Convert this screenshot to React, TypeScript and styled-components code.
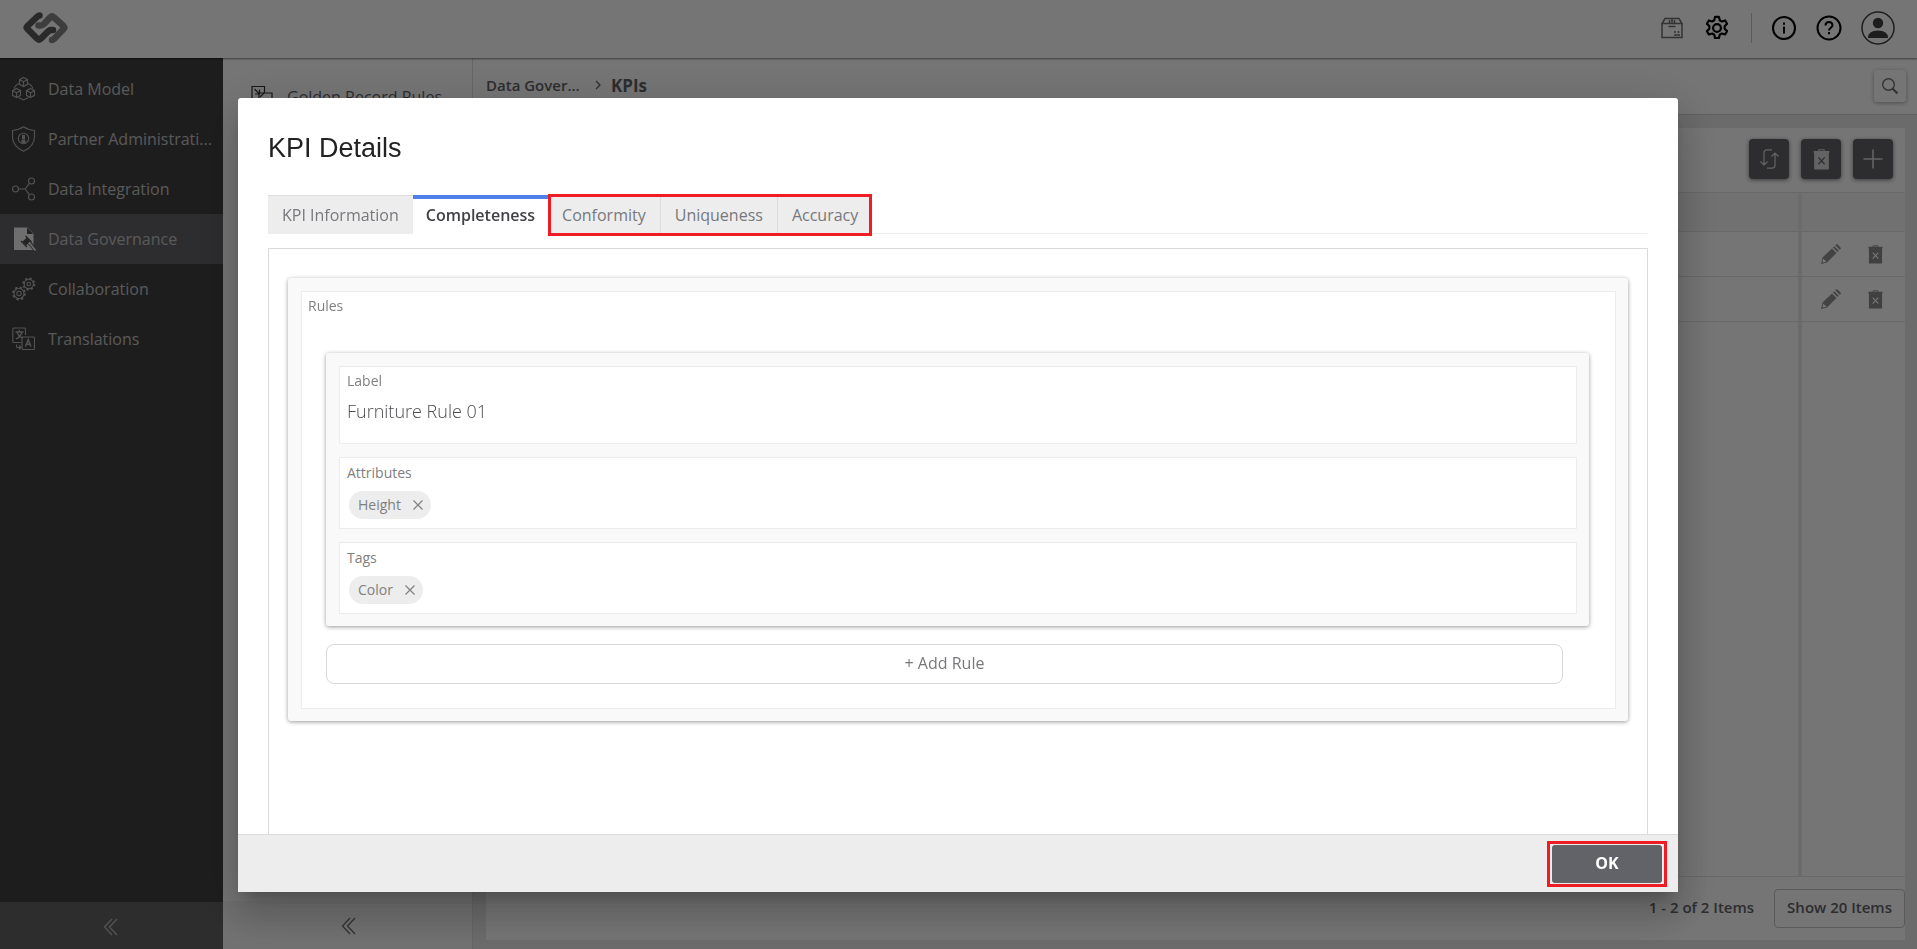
import React from "react";
import styled, { createGlobalStyle, css } from "styled-components";

const GlobalStyle = createGlobalStyle`
  *, *::before, *::after { box-sizing: border-box; }
  html, body, #root { height: 100%; }
  body {
    margin: 0;
    font-family: "Open Sans", "Noto Sans", sans-serif;
    font-size: 16px;
    color: #626368;
    overflow: hidden;
  }
  button, input { font: inherit; color: inherit; }
  button { cursor: pointer; }
`;

/* ---------- application shell ---------- */

const Shell = styled.div`
  display: flex;
  flex-direction: column;
  height: 100vh;
  background: #fff;
`;

const Header = styled.header`
  display: flex;
  align-items: center;
  justify-content: space-between;
  flex: none;
  height: 58px;
  padding: 0 22px 2px 23px;
  background: #fff;
  box-shadow: 0 1px 2px rgba(0, 0, 0, 0.5);
  z-index: 1;
`;

const HeaderTools = styled.div`
  display: flex;
  align-items: center;
`;

const IconButton = styled.button<{ $gap?: number }>`
  display: flex;
  padding: 0;
  margin-left: ${(p) => p.$gap ?? 0}px;
  border: 0;
  background: none;
  color: #000;
`;

const Divider = styled.span`
  width: 1px;
  height: 30px;
  margin-left: 21px;
  background: #c4c4c4;
`;

const Body = styled.div`
  display: flex;
  flex: 1;
  min-height: 0;
`;

const Sidebar = styled.nav`
  display: flex;
  flex-direction: column;
  flex: none;
  width: 223px;
  background: #414141;
`;

const MenuList = styled.ul`
  flex: 1;
  margin: 0;
  padding: 6px 0 0;
  list-style: none;
`;

const MenuLink = styled.a<{ $active?: boolean }>`
  display: flex;
  align-items: center;
  gap: 12px;
  height: 50px;
  padding: 0 0 0 12px;
  color: #c2c2c2;
  text-decoration: none;
  white-space: nowrap;
  background: ${(p) => (p.$active ? "#626267" : "none")};

  svg { flex: none; }
`;

const CollapseButton = styled.button<{ $light?: boolean }>`
  display: flex;
  align-items: center;
  justify-content: center;
  flex: none;
  height: ${(p) => (p.$light ? 48 : 47)}px;
  padding: ${(p) => (p.$light ? "2px 0 0 2px" : "3px 2px 0 0")};
  border: 0;
  color: ${(p) => (p.$light ? "#6f6f6f" : "#b4b4b4")};
  background: ${(p) => (p.$light ? "#f6f6f6" : "#626262")};
`;

const SubPanel = styled.aside`
  display: flex;
  flex-direction: column;
  flex: none;
  width: 250px;
  border-right: 1px solid #dedede;
`;

const SubMenu = styled.div`
  flex: 1;
  padding: 27px 20px 0 28px;
`;

const SubLink = styled.a`
  display: flex;
  align-items: center;
  gap: 14px;
  color: #626368;
  text-decoration: none;
  line-height: 24px;
`;

const Main = styled.main`
  display: flex;
  flex-direction: column;
  flex: 1;
  min-width: 0;
  background: #e9e9e9;
`;

const TopBar = styled.div`
  display: flex;
  align-items: center;
  justify-content: space-between;
  flex: none;
  height: 57px;
  padding: 0 11px 0 13px;
  background: #fff;
  border-bottom: 1px solid #cfcfcf;
`;

const Breadcrumb = styled.nav`
  display: flex;
  align-items: center;
  gap: 10px;
  padding-bottom: 2px;
  font-size: 17px;
  font-weight: 700;

  a {
    width: 99px;
    white-space: nowrap;
    font-size: 15px;
    font-weight: 600;
    color: inherit;
    text-decoration: none;
  }
`;

const SearchButton = styled.button`
  display: flex;
  align-items: center;
  justify-content: center;
  width: 32px;
  height: 32px;
  padding: 0;
  border: 0;
  border-radius: 3px;
  background: #fff;
  box-shadow: 0 1px 4px rgba(0, 0, 0, 0.35);
`;

const GridCard = styled.section`
  display: flex;
  flex-direction: column;
  flex: 1;
  min-height: 0;
  margin: 13px 12px 9px 13px;
  background: #fff;
`;

const GridTools = styled.div`
  display: flex;
  justify-content: flex-end;
  gap: 12px;
  flex: none;
  height: 64px;
  padding: 11px 12px 0;
`;

const ToolButton = styled.button`
  display: flex;
  align-items: center;
  justify-content: center;
  width: 40px;
  height: 40px;
  padding: 0;
  border: 0;
  border-radius: 4px;
  color: #d8d8d8;
  background: #626368;
  box-shadow: 0 1px 4px rgba(0, 0, 0, 0.5);
`;

const Grid = styled.table`
  flex: 1;
  display: grid;
  grid-template-rows: auto 1fr;
  border-collapse: collapse;

  thead, tbody { display: flex; flex-direction: column; }
`;

const GridRow = styled.tr<{ $kind: "head" | "row" | "rest" }>`
  display: flex;
  border-top: 1px solid #e4e4e4;
  background: ${(p) => (p.$kind === "head" ? "#f6f6f6" : "#fff")};
  ${(p) =>
    p.$kind === "rest"
      ? css`flex: 1; border-bottom: 1px solid #e4e4e4;`
      : css`height: ${p.$kind === "head" ? 39 : 45}px;`}

  th, td { padding: 0; }
  > :first-child { flex: 1; }
  > :last-child {
    display: flex;
    align-items: center;
    gap: 27px;
    width: 107px;
    padding-left: 19px;
    border-left: 4px solid #e9e9e9;
  }
`;

const Pager = styled.div`
  display: flex;
  align-items: center;
  justify-content: flex-end;
  gap: 20px;
  flex: none;
  height: 63px;
  font-size: 15px;
  font-weight: 600;

  span { padding-bottom: 4px; }
`;

const PageSizeButton = styled.button`
  height: 39px;
  padding: 0 12px 4px;
  border: 1px solid #c4c4c4;
  border-radius: 4px;
  background: none;
`;

/* ---------- dialog ---------- */

const Backdrop = styled.div`
  position: fixed;
  inset: 0;
  z-index: 10;
  display: flex;
  padding: 98px 239px 57px 238px;
  background: rgba(0, 0, 0, 0.54);
`;

const Dialog = styled.section`
  display: flex;
  flex-direction: column;
  flex: 1;
  border-radius: 3px 3px 0 0;
  background: #fff;
  box-shadow: 0 11px 15px -7px rgba(0, 0, 0, 0.2),
    0 24px 38px 3px rgba(0, 0, 0, 0.14), 0 9px 46px 8px rgba(0, 0, 0, 0.12);
`;

const DialogContent = styled.div`
  display: flex;
  flex-direction: column;
  flex: 1;
  min-height: 0;
  padding: 31px 30px 0;
`;

const Title = styled.h1`
  margin: 0;
  font-family: "Liberation Sans", Arial, sans-serif;
  font-size: 27px;
  line-height: 38px;
  font-weight: 400;
  color: #222;
`;

const TabBar = styled.div`
  display: flex;
  flex: none;
  height: 39px;
  margin: 28px 1px 14px 0;
  border-bottom: 1px solid #ececec;
`;

const Tab = styled.button<{ $active?: boolean }>`
  height: 39px;
  padding: 0 14px;
  border: 0;
  border-top: 1px solid #dcdcdc;
  color: #77787c;
  background: #ededed;

  & + & { border-left: 1px solid #dcdcdc; }

  ${(p) =>
    p.$active &&
    css`
      && {
        border-top: 4px solid #4f80ea;
        border-left: 0;
        padding: 0 13px 3px;
        font-weight: 600;
        color: #414246;
        background: #fff;
      }
    `}
`;

const Highlight = styled.div`
  position: relative;
  display: flex;

  &::after {
    content: "";
    position: absolute;
    inset: -1px 0 -3px 0;
    border: 3px solid #f01c24;
    pointer-events: none;
  }
`;

const Panel = styled.div`
  flex: 1;
  min-height: 0;
  padding: 29px 19px 0;
  border: 1px solid #dadada;
  border-bottom: 0;
`;

const Card = styled.div`
  display: flex;
  flex-direction: column;
  gap: 13px;
  padding: 13px 12px 12px 13px;
  border-radius: 3px;
  background: #f9f9f9;
  box-shadow: 0 1px 4px rgba(0, 0, 0, 0.4);
`;

const Group = styled.fieldset`
  min-width: 0;
  margin: 0;
  padding: 4px 26px 24px 24px;
  border: 1px solid #ececec;
  background: #fff;
`;

const GroupLabel = styled.legend`
  float: left;
  width: 100%;
  margin: 0 0 37px -18px;
  padding: 0;
  font-size: 14px;
  line-height: 20px;
  color: #808080;
`;

const Clear = styled.div`
  clear: both;
`;

const Field = styled.div<{ $tall?: boolean }>`
  height: ${(p) => (p.$tall ? 78 : 72)}px;
  padding: ${(p) => (p.$tall ? 4 : 5)}px 7px 0;
  border: 1px solid #ececec;
  background: #fff;
`;

const FieldLabel = styled.label`
  display: block;
  font-size: 14px;
  line-height: 20px;
  color: #808080;
`;

const TextInput = styled.input`
  width: 100%;
  height: 30px;
  margin-top: 5px;
  padding: 0;
  border: 0;
  outline: 0;
  font-size: 18px;
  font-weight: 300;
  color: #4c4c4f;
  background: none;
`;

const Chip = styled.span`
  display: flex;
  align-items: center;
  gap: 12px;
  width: fit-content;
  height: 28px;
  margin: 8px 0 0 2px;
  padding: 0 8px 1px 9px;
  border-radius: 14px;
  font-size: 14px;
  color: #808080;
  background: #ededed;

  button {
    display: flex;
    padding: 0;
    border: 0;
    background: none;
  }
`;

const AddButton = styled.button`
  display: block;
  width: calc(100% - 26px);
  height: 40px;
  margin-top: 18px;
  padding: 0 0 3px;
  border: 1px solid #d8d8d8;
  border-radius: 8px;
  color: #77787c;
  background: #fff;
`;

const DialogFooter = styled.footer`
  display: flex;
  align-items: center;
  justify-content: flex-end;
  flex: none;
  height: 58px;
  padding: 0 11px;
  border-top: 1px solid #dadada;
  background: #ededed;
`;

const OkFrame = styled.div`
  display: flex;
  padding: 1px 2px;
  border: 3px solid #f01c24;
`;

const OkButton = styled.button`
  width: 110px;
  height: 38px;
  padding: 0 0 2px;
  border: 0;
  border-radius: 3px;
  font-weight: 700;
  color: #fff;
  background: #626368;
`;

/* ---------- icons ---------- */

const Logo = () => (
  <svg width="46" height="32" viewBox="23 12 46 32" fill="none" strokeWidth="6.5" strokeLinejoin="round" strokeLinecap="round">
    <path d="M38.5 25.5h2q2 0 3.500-1.500L50 17.500q2-2 4 0l9.500 8.500q1.500 1.500 0 3L54 39q-1 1-2 1" stroke="#858585" />
    <path d="M39.500 15.500q-1 0-2 1L27.500 26q-1.500 1.500 0 3L37 38.500q2 2 4 0l7-7q1.500-1.500 3-1.500h2" stroke="#595959" />
  </svg>
);

const PackageIcon = () => (
  <svg width="22" height="22" viewBox="0 0 22 22" fill="none" stroke="#707070" strokeWidth="1.500">
    <path d="M1 6.500 4 1.500h14l3 5V20.500H1zM1 6.500h20M8.500 6.500V3M13.500 6.500V3M11 1.500v5M7.500 9.500h7" />
    <path d="M14 14v2M17.500 14v2M13 18h6" />
  </svg>
);

const GearIcon = () => (
  <svg width="26" height="26" viewBox="0 0 24 24" fill="none" stroke="currentColor" strokeWidth="2" strokeLinejoin="round">
    <path d="M10.200 1.800h3.600l.7 3 2 1.150 3-.9 1.800 3.100-2.250 2.100v2.500l2.250 2.100-1.800 3.100-3-.9-2 1.150-.7 3h-3.600l-.7-3-2-1.150-3 .9-1.800-3.100 2.250-2.100v-2.500L2.700 8.150l1.800-3.100 3 .9 2-1.150z" />
    <circle cx="12" cy="12" r="3.600" />
  </svg>
);

const InfoIcon = () => (
  <svg width="26" height="26" viewBox="0 0 26 26" fill="none" stroke="currentColor" strokeWidth="2">
    <circle cx="13" cy="13" r="11" />
    <path d="M13 11.500V18.500M13 7.500v2.200" />
  </svg>
);

const HelpIcon = () => (
  <svg width="26" height="26" viewBox="0 0 26 26" fill="none" stroke="currentColor" strokeWidth="2">
    <circle cx="13" cy="13" r="11.500" />
    <path d="M9.500 10.500C9.500 6 16.500 6 16.500 10.200 16.500 12.500 13 13 13 15.500M13 17v2.200" />
  </svg>
);

const AvatarIcon = () => (
  <svg width="34" height="34" viewBox="0 0 34 34">
    <circle cx="17" cy="17" r="16" fill="none" stroke="#414141" strokeWidth="1.500" />
    <circle cx="17" cy="12" r="5.200" fill="#414141" />
    <path d="M7 27q0-7.500 10-7.500T27 27z" fill="#414141" />
  </svg>
);

const MenuSvg = ({ children }: { children: React.ReactNode }) => (
  <svg width="24" height="26" viewBox="0 0 24 26" fill="none" stroke="#b4b4b4" strokeWidth="1.100">
    {children}
  </svg>
);

const cube = (x: number, y: number) => (
  <path d={`M${x} ${y - 4.500}l4 2.200v4.600l-4 2.200-4-2.200v-4.600zM${x - 4} ${y - 2.300}l4 2 4-2M${x} ${y - 0.3}v4.800`} />
);

const ModelIcon = () => (
  <MenuSvg>
    {cube(11.5, 6)}
    {cube(4.500, 17)}
    {cube(18.500, 17)}
    <path d="M7 7.500C4 9 2.500 10.500 2.300 12.500M16 7.500c3 1.500 4.500 3 4.700 5M6.500 21.500l5 2.500 5-2.500" />
  </MenuSvg>
);

const ShieldIcon = () => (
  <MenuSvg>
    <path d="M11.500.8Q16 4 22.500 4.500v6.500Q22.500 20 11.500 25.200.5 20 .5 11V4.500Q7 4 11.500.8z" />
    <circle cx="11.500" cy="12.500" r="5.200" />
    <path d="M11.500 9v4.500M9.500 15.500h4" strokeWidth="3" />
  </MenuSvg>
);

const IntegrationIcon = () => (
  <MenuSvg>
    <circle cx="3.500" cy="13" r="3" />
    <circle cx="19.500" cy="5" r="3" />
    <circle cx="19.500" cy="21" r="3" />
    <path d="M6.500 13H13L17.500 7.300M13 13l4.500 5.700" />
  </MenuSvg>
);

const GovernanceIcon = () => (
  <svg width="24" height="26" viewBox="0 0 24 26">
    <path d="M2 1.500h13.500l6 6V24H2z" fill="#efefef" />
    <path d="M15 1.500v6.500h6.500" fill="#4e4e52" />
    <path d="M10.500 15.500l4.500-4 3.500 4-4.500 4z" fill="#4e4e52" />
    <path d="M13.500 10l6 6M9 15l6 6" stroke="#4e4e52" strokeWidth="1.300" />
    <path d="M17.500 17l6 7" stroke="#626267" strokeWidth="4" />
    <path d="M17 16.500l6.500 8" stroke="#efefef" strokeWidth="1.800" />
  </svg>
);

const gear = (cx: number, cy: number, r: number) => (
  <g>
    <circle cx={cx} cy={cy} r={r} />
    <circle cx={cx} cy={cy} r={r - 2.8} />
    <circle cx={cx} cy={cy} r={r + 1} strokeWidth="1.800" strokeDasharray={`${((r + 1) * Math.PI) / 8}`} />
  </g>
);

const CollaborationIcon = () => (
  <MenuSvg>
    {gear(7, 17.500, 5)}
    {gear(16.800, 8, 4.600)}
  </MenuSvg>
);

const TranslationsIcon = () => (
  <MenuSvg>
    <path d="M13.500 9V3q0-1-1-1H1.800q-1 0-1 1v12.500q0 1 1 1H9" />
    <rect x="10" y="11" width="12.500" height="12.500" rx="1" />
    <path d="M3.500 6h8M7.300 4v2M10 6q-1.500 5-6 7M5 6q1.500 4.500 6 6" strokeWidth="1.300" />
    <path d="M13.500 20.500l2.700-7 2.700 7M14.300 18.300h3.800" strokeWidth="1.400" />
    <path d="M4.500 18.500v2q0 1 1 1h3M7 19.500l2 2-2 2" />
  </MenuSvg>
);

const Chevrons = () => (
  <svg width="15" height="18" viewBox="0 0 15 18" fill="none" stroke="currentColor" strokeWidth="1.300">
    <path d="M9 1 1.500 9 9 17M14 1 6.500 9l7.500 8" />
  </svg>
);

const GoldenIcon = () => (
  <svg width="22" height="24" viewBox="0 0 22 24" fill="none" stroke="#333" strokeWidth="1.200">
    <path d="M13.500 8V1.500H1V17h7M8 8h13v15H8zM3.500 4l5 5M8.500 4.500V9H4" />
    <path d="M13 8 9 12" />
  </svg>
);

const SearchIcon = () => (
  <svg width="18" height="18" viewBox="0 0 18 18" fill="none" stroke="#707070">
    <circle cx="7.500" cy="7.500" r="5.800" strokeWidth="1.400" />
    <path d="M11.500 11.500l5 5" strokeWidth="2.200" />
  </svg>
);

const SyncIcon = () => (
  <svg width="20" height="20" viewBox="0 0 20 20" fill="none" stroke="currentColor" strokeWidth="1.200">
    <path d="M13 .8H8q-3 0-3 3V16M1.500 12.500 5 16l3.500-3.500M8 19.200h5q3 0 3-3V4M12.500 7.500 16 4l3.500 3.500" />
  </svg>
);

const TrashIcon = ({ width, body, mark }: { width: number; body: string; mark: string }) => (
  <svg width={width} height={width + 4} viewBox="0 0 16 20">
    <path d="M5.500 2V.7h5V2" fill="none" stroke={body} />
    <path d="M.5 1.800h15V3.500h-.5v16H1v-16H.5z" fill={body} />
    <path d="M5 8l6 6.500M11 8l-6 6.500" stroke={mark} strokeWidth="1.200" />
  </svg>
);

const PlusIcon = () => (
  <svg width="20" height="20" viewBox="0 0 20 20" stroke="currentColor" strokeWidth="1.600">
    <path d="M10 .5v19M.5 10h19" />
  </svg>
);

const PencilIcon = () => (
  <svg width="20" height="20" viewBox="0 0 20 20" fill="#929292">
    <path d="M0 20l1.500-6.500L11 4.500l4.500 4.500L6 18.500zM12 3.600l1.300-1.300 4.500 4.500-1.300 1.300zM14.300 1.300l.7-.7q.8-.8 1.600 0l2.900 2.900q.8.800 0 1.600l-.7.7z" />
    <path d="M2.200 14.500l3.300 3.200-3.200.9-.9-.8z" fill="#fff" />
  </svg>
);

const CloseIcon = () => (
  <svg width="10" height="10" viewBox="0 0 10 10" stroke="#808184" strokeWidth="1.200">
    <path d="M.5.5l9 9M9.500.5l-9 9" />
  </svg>
);

/* ---------- page ---------- */

const menu = [
  { label: "Data Model", icon: <ModelIcon /> },
  { label: "Partner Administrati...", icon: <ShieldIcon /> },
  { label: "Data Integration", icon: <IntegrationIcon /> },
  { label: "Data Governance", icon: <GovernanceIcon />, active: true },
  { label: "Collaboration", icon: <CollaborationIcon /> },
  { label: "Translations", icon: <TranslationsIcon /> },
];

const ChipField = ({ label, value }: { label: string; value: string }) => (
  <Field role="group" aria-label={label}>
    <FieldLabel as="div">{label}</FieldLabel>
    <Chip>
      {value}
      <button type="button" aria-label={`Remove ${value}`}>
        <CloseIcon />
      </button>
    </Chip>
  </Field>
);

const DataRow = () => (
  <GridRow $kind="row">
    <td />
    <td>
      <IconButton aria-label="Edit"><PencilIcon /></IconButton>
      <IconButton aria-label="Delete"><TrashIcon width={15} body="#8c8c8c" mark="#fff" /></IconButton>
    </td>
  </GridRow>
);

export default function App() {
  return (
    <>
      <GlobalStyle />
      <Shell>
        <Header>
          <Logo />
          <HeaderTools>
            <IconButton aria-label="Packages"><PackageIcon /></IconButton>
            <IconButton $gap={21} aria-label="Settings"><GearIcon /></IconButton>
            <Divider />
            <IconButton $gap={19} aria-label="Information"><InfoIcon /></IconButton>
            <IconButton $gap={19} aria-label="Help"><HelpIcon /></IconButton>
            <IconButton $gap={19} aria-label="Account"><AvatarIcon /></IconButton>
          </HeaderTools>
        </Header>
        <Body>
          <Sidebar>
            <MenuList>
              {menu.map((m) => (
                <li key={m.label}>
                  <MenuLink href="#" $active={m.active}>
                    {m.icon}
                    <span>{m.label}</span>
                  </MenuLink>
                </li>
              ))}
            </MenuList>
            <CollapseButton aria-label="Collapse menu"><Chevrons /></CollapseButton>
          </Sidebar>
          <SubPanel>
            <SubMenu>
              <SubLink href="#"><GoldenIcon />Golden Record Rules</SubLink>
            </SubMenu>
            <CollapseButton $light aria-label="Collapse panel"><Chevrons /></CollapseButton>
          </SubPanel>
          <Main>
            <TopBar>
              <Breadcrumb>
                <a href="#">Data Gover...</a>
                <svg width="6" height="10" viewBox="0 0 6 10" fill="none" stroke="#626368" strokeWidth="1.300"><path d="M1 1l4 4-4 4" /></svg>
                <span>KPIs</span>
              </Breadcrumb>
              <SearchButton aria-label="Search"><SearchIcon /></SearchButton>
            </TopBar>
            <GridCard>
              <GridTools>
                <ToolButton aria-label="Refresh"><SyncIcon /></ToolButton>
                <ToolButton aria-label="Delete"><TrashIcon width={17} body="#d8d8d8" mark="#626368" /></ToolButton>
                <ToolButton aria-label="Add"><PlusIcon /></ToolButton>
              </GridTools>
              <Grid>
                <thead>
                  <GridRow $kind="head"><th /><th /></GridRow>
                </thead>
                <tbody>
                  <DataRow />
                  <DataRow />
                  <GridRow $kind="rest"><td /><td /></GridRow>
                </tbody>
              </Grid>
              <Pager>
                <span>1 - 2 of 2 Items</span>
                <PageSizeButton>Show 20 Items</PageSizeButton>
              </Pager>
            </GridCard>
          </Main>
        </Body>
      </Shell>

      <Backdrop>
        <Dialog role="dialog" aria-modal="true" aria-labelledby="dialog-title">
          <DialogContent>
            <Title id="dialog-title">KPI Details</Title>
            <TabBar role="tablist">
              <Tab role="tab">KPI Information</Tab>
              <Tab role="tab" aria-selected $active>Completeness</Tab>
              <Highlight>
                <Tab role="tab">Conformity</Tab>
                <Tab role="tab">Uniqueness</Tab>
                <Tab role="tab">Accuracy</Tab>
              </Highlight>
            </TabBar>
            <Panel role="tabpanel">
              <Card>
                <Group>
                  <GroupLabel>Rules</GroupLabel>
                  <Clear />
                  <Card>
                    <Field $tall>
                      <FieldLabel htmlFor="rule-label">Label</FieldLabel>
                      <TextInput id="rule-label" defaultValue="Furniture Rule 01" />
                    </Field>
                    <ChipField label="Attributes" value="Height" />
                    <ChipField label="Tags" value="Color" />
                  </Card>
                  <AddButton type="button">+ Add Rule</AddButton>
                </Group>
              </Card>
            </Panel>
          </DialogContent>
          <DialogFooter>
            <OkFrame>
              <OkButton type="button">OK</OkButton>
            </OkFrame>
          </DialogFooter>
        </Dialog>
      </Backdrop>
    </>
  );
}
